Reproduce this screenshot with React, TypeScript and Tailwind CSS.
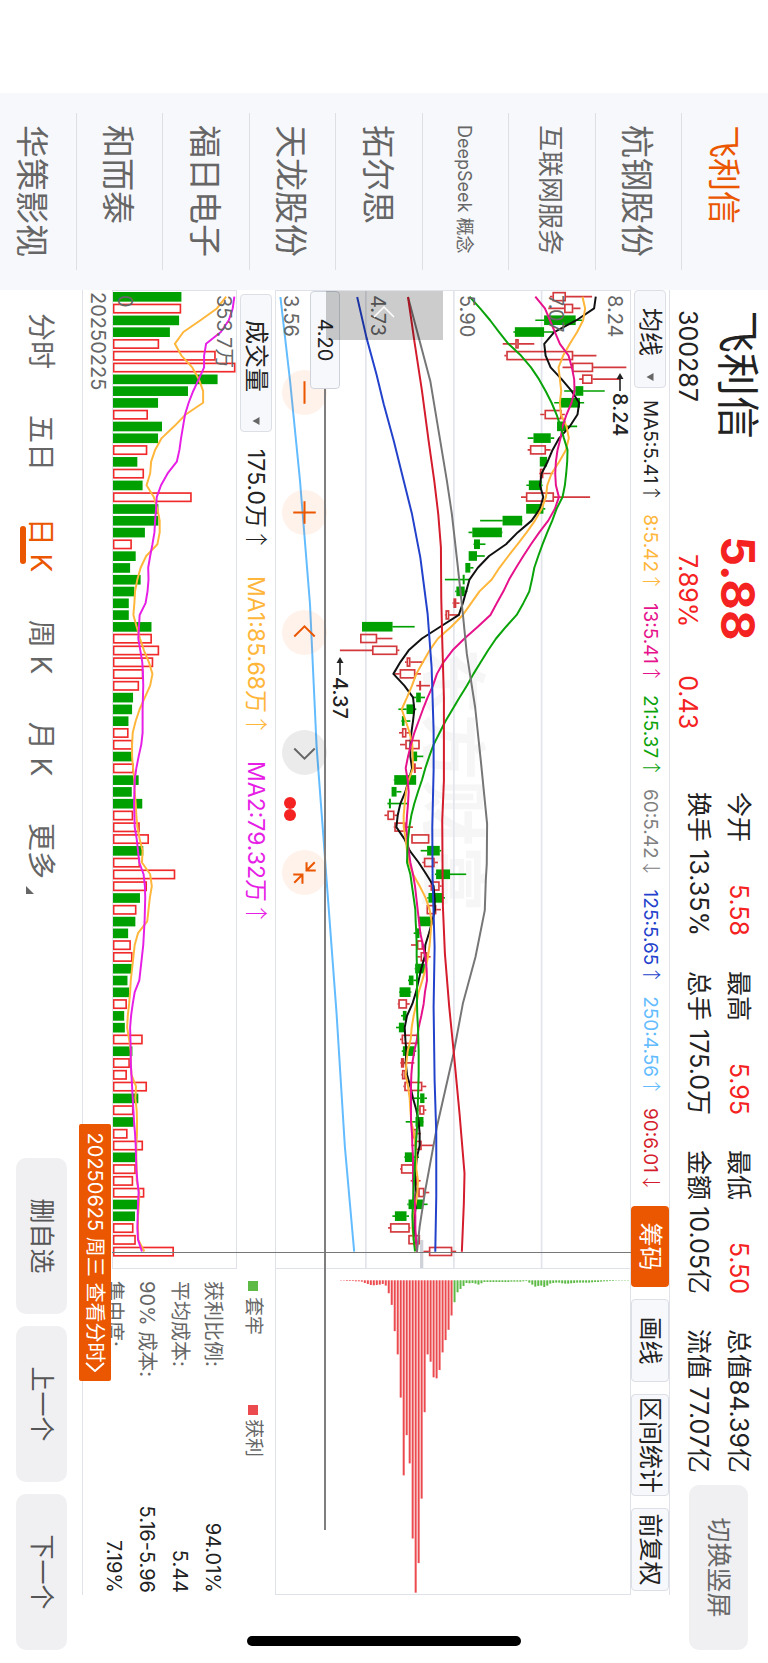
import { clsx } from "clsx";

// Chart space is 3 units per pixel. Prices are measured from the bottom of the screen.
const TOP = 1893;
const VOLUME_TOP = 713;
const STEP = 35.4;
const FIRST = 17;

const stocks = ["飞利信", "杭钢股份", "互联网服务", "DeepSeek 概念", "拓尔思", "天龙股份", "福日电子", "和而泰", "华策影视"];

const stats = [
  { label: "今开", value: "5.58", up: true },
  { label: "最高", value: "5.95", up: true },
  { label: "最低", value: "5.50", up: true },
  { label: "总值", value: "84.39亿" },
  { label: "换手", value: "13.35%" },
  { label: "总手", value: "175.0万" },
  { label: "金额", value: "10.05亿" },
  { label: "流值", value: "77.07亿" },
];

const averages = [
  { text: "MA5:5.41", dir: "↑", color: "text-[#222222]" },
  { text: "8:5.42", dir: "↑", color: "text-[#ffb63a]" },
  { text: "13:5.41", dir: "↑", color: "text-[#e6128c]" },
  { text: "21:5.37", dir: "↑", color: "text-[#0aa30a]" },
  { text: "60:5.42", dir: "↓", color: "text-[#808080]" },
  { text: "125:5.65", dir: "↑", color: "text-[#2342cc]" },
  { text: "250:4.56", dir: "↑", color: "text-[#63bcff]" },
  { text: "90:6.01", dir: "↓", color: "text-[#d41c2c]" },
];

// direction, body low, body high, wick low, wick high
type Candle = [string, number, number, number, number];

const candles: Candle[] = [
  ["r", 1660, 1700, 1652, 1779], ["r", 1695, 1722, 1647, 1744], ["g", 1635, 1729, 1608, 1749], ["g", 1547, 1634, 1542, 1667],
  ["r", 1548, 1558, 1510, 1605], ["r", 1521, 1722, 1515, 1792], ["r", 1719, 1782, 1690, 1882], ["r", 1749, 1780, 1740, 1864],
  ["g", 1729, 1752, 1695, 1817], ["g", 1685, 1742, 1665, 1755], ["r", 1636, 1687, 1623, 1697], ["g", 1674, 1700, 1674, 1734],
  ["g", 1603, 1654, 1585, 1665], ["r", 1592, 1640, 1585, 1654], ["g", 1622, 1643, 1622, 1643], ["r", 1622, 1632, 1620, 1662],
  ["g", 1589, 1627, 1581, 1630], ["r", 1580, 1664, 1565, 1773], ["g", 1581, 1632, 1581, 1638], ["g", 1510, 1568, 1442, 1569],
  ["g", 1419, 1507, 1407, 1509], ["g", 1424, 1441, 1422, 1458], ["g", 1408, 1432, 1408, 1456], ["g", 1398, 1412, 1398, 1422],
  ["g", 1391, 1395, 1336, 1410], ["g", 1371, 1395, 1367, 1404], ["r", 1362, 1370, 1359, 1380], ["r", 1338, 1349, 1336, 1380],
  ["g", 1087, 1178, 1087, 1245], ["r", 1081, 1132, 1081, 1178], ["r", 1117, 1193, 1020, 1199], ["r", 1221, 1232, 1216, 1273],
  ["r", 1200, 1247, 1185, 1264], ["r", 1261, 1264, 1250, 1291], ["g", 1250, 1263, 1237, 1276], ["g", 1221, 1244, 1196, 1250],
  ["g", 1207, 1214, 1205, 1232], ["r", 1207, 1220, 1198, 1228], ["r", 1217, 1260, 1201, 1260], ["g", 1240, 1252, 1237, 1271],
  ["r", 1244, 1248, 1238, 1267], ["g", 1184, 1249, 1182, 1249], ["g", 1176, 1190, 1176, 1205], ["g", 1168, 1173, 1163, 1222],
  ["r", 1163, 1184, 1154, 1192], ["r", 1184, 1218, 1182, 1240], ["r", 1235, 1289, 1235, 1289], ["g", 1283, 1320, 1263, 1325],
  ["r", 1273, 1305, 1268, 1315], ["g", 1310, 1351, 1306, 1400], ["r", 1293, 1320, 1287, 1326], ["g", 1287, 1329, 1283, 1336],
  ["r", 1281, 1310, 1281, 1324], ["g", 1258, 1295, 1258, 1295], ["g", 1249, 1259, 1242, 1265], ["r", 1252, 1270, 1234, 1272],
  ["r", 1263, 1283, 1253, 1293], ["g", 1247, 1275, 1245, 1278], ["g", 1228, 1241, 1225, 1255], ["g", 1200, 1232, 1198, 1235],
  ["r", 1196, 1222, 1194, 1230], ["g", 1210, 1220, 1204, 1223], ["g", 1198, 1213, 1189, 1216], ["r", 1206, 1255, 1201, 1257],
  ["g", 1210, 1245, 1206, 1250], ["r", 1204, 1213, 1202, 1244], ["r", 1207, 1218, 1205, 1223], ["r", 1214, 1268, 1211, 1280],
  ["g", 1262, 1274, 1243, 1282], ["r", 1259, 1274, 1256, 1280], ["g", 1248, 1271, 1218, 1272], ["r", 1240, 1252, 1235, 1263],
  ["r", 1248, 1266, 1235, 1301], ["g", 1216, 1240, 1214, 1258], ["r", 1204, 1242, 1201, 1242], ["r", 1248, 1254, 1233, 1263],
  ["r", 1256, 1274, 1250, 1289], ["g", 1227, 1270, 1223, 1284], ["g", 1186, 1220, 1178, 1228], ["r", 1171, 1230, 1165, 1232],
  ["r", 1226, 1261, 1226, 1261], ["r", 1288, 1358, 1271, 1370],
];

const volumes = [
  547, 546, 540, 512, 479, 651, 711, 657, 567, 476, 445, 488, 476, 443, 413, 433, 429, 578, 477, 477, 436, 396, 408, 391, 423, 404, 387,
  387, 456, 457, 479, 461, 431, 418, 400, 397, 386, 386, 399, 397, 402, 417, 396, 428, 400, 420, 448, 431, 421, 528, 442, 421, 410, 407,
  385, 393, 398, 396, 383, 388, 381, 373, 375, 429, 398, 390, 381, 442, 416, 401, 402, 383, 430, 408, 408, 400, 434, 413, 406, 401, 408,
  524,
];
// Volume colours follow the day's close, which differs from the candle on a few days
const redVolumes = new Set([
  1, 4, 5, 6, 10, 13, 15, 17, 21, 29, 30, 31, 32, 33, 37, 38, 40, 44, 45, 46, 48, 49, 50, 52, 55, 56, 60, 63, 65, 66, 67, 69, 71, 72, 74,
  75, 76, 79, 80, 81,
]);

const ma5 = [
  1790, 1785, 1732, 1665, 1635, 1639, 1654, 1687, 1717, 1740, 1735, 1712, 1680, 1660, 1645, 1627, 1622, 1632, 1622, 1597, 1555, 1520,
  1469, 1435, 1410, 1400, 1390, 1378, 1322, 1267, 1227, 1202, 1181, 1214, 1240, 1244, 1240, 1235, 1232, 1232, 1237, 1227, 1217, 1202,
  1194, 1190, 1214, 1230, 1257, 1280, 1302, 1305, 1306, 1298, 1288, 1277, 1275, 1265, 1257, 1249, 1238, 1222, 1215, 1217, 1220, 1218,
  1222, 1232, 1240, 1250, 1257, 1260, 1260, 1252, 1248, 1246, 1250, 1249, 1245, 1245, 1248, 1252,
];
const ma8 = [
  1750, 1758, 1752, 1734, 1712, 1692, 1678, 1682, 1686, 1682, 1685, 1702, 1709, 1700, 1680, 1657, 1644, 1640, 1627, 1607, 1582, 1555,
  1527, 1500, 1477, 1440, 1415, 1390, 1355, 1315, 1290, 1270, 1250, 1237, 1222, 1206, 1218, 1230, 1238, 1239, 1240, 1227, 1219, 1215,
  1212, 1212, 1218, 1222, 1228, 1240, 1260, 1278, 1290, 1296, 1293, 1290, 1285, 1278, 1268, 1257, 1250, 1242, 1236, 1233, 1224, 1220,
  1218, 1225, 1230, 1232, 1235, 1243, 1247, 1250, 1250, 1255, 1253, 1248, 1240, 1238, 1242, 1250,
];
const ma13 = [
  1608, 1637, 1652, 1667, 1682, 1708, 1718, 1725, 1726, 1717, 1702, 1690, 1684, 1675, 1670, 1668, 1670, 1679, 1667, 1647, 1620, 1595,
  1572, 1550, 1529, 1512, 1492, 1473, 1435, 1395, 1359, 1332, 1312, 1300, 1284, 1270, 1257, 1244, 1234, 1225, 1218, 1224, 1227, 1225,
  1222, 1220, 1223, 1227, 1232, 1240, 1246, 1250, 1254, 1258, 1262, 1270, 1277, 1281, 1282, 1276, 1272, 1265, 1257, 1252, 1244, 1238,
  1235, 1234, 1234, 1234, 1234, 1237, 1238, 1240, 1240, 1240, 1242, 1246, 1247, 1247, 1249, 1252,
];
const ma21 = [
  1410, 1442, 1472, 1499, 1527, 1565, 1595, 1619, 1639, 1657, 1672, 1684, 1694, 1705, 1704, 1701, 1697, 1690, 1672, 1659, 1644, 1630,
  1617, 1605, 1598, 1590, 1572, 1552, 1520, 1490, 1466, 1444, 1422, 1402, 1380, 1359, 1338, 1320, 1302, 1289, 1277, 1267, 1255, 1244,
  1235, 1229, 1225, 1223, 1222, 1232, 1237, 1242, 1247, 1248, 1250, 1251, 1251, 1252, 1252, 1252, 1252, 1253, 1255, 1256, 1257, 1257,
  1257, 1256, 1255, 1254, 1253, 1251, 1248, 1247, 1245, 1243, 1241, 1240, 1238, 1240, 1242, 1246,
];
const volumeMa1 = [
  683, 655, 605, 553, 527, 547, 580, 600, 613, 613, 560, 525, 487, 467, 455, 452, 441, 463, 474, 481, 481, 474, 440, 423, 413, 406, 404,
  401, 411, 421, 433, 448, 459, 452, 436, 420, 408, 399, 397, 397, 400, 404, 405, 408, 410, 413, 420, 429, 427, 452, 457, 451, 447, 443,
  415, 405, 401, 397, 393, 391, 388, 384, 382, 388, 393, 393, 395, 409, 407, 411, 412, 412, 410, 410, 411, 411, 419, 418, 415, 415, 416,
  434,
];
const volumeMa2 = [
  708, 703, 691, 667, 622, 616, 616, 600, 583, 569, 558, 552, 546, 541, 533, 505, 485, 472, 470, 467, 465, 459, 452, 446, 447, 444, 438,
  420, 418, 416, 422, 428, 430, 431, 430, 429, 429, 429, 425, 417, 410, 405, 404, 403, 404, 405, 411, 415, 419, 432, 436, 437, 436, 435,
  433, 431, 427, 423, 419, 405, 399, 394, 391, 392, 393, 393, 395, 397, 399, 401, 403, 406, 408, 409, 410, 413, 417, 415, 414, 413, 415,
  427,
];

type Point = [number, number];

const ma60: Point[] = [
  [18, 1225], [150, 1260], [270, 1292], [420, 1317], [570, 1342], [670, 1357], [820, 1374], [970, 1390], [1090, 1402], [1250, 1427],
  [1410, 1444], [1600, 1463], [1720, 1462], [1770, 1459], [1860, 1456], [2000, 1428], [2140, 1390], [2290, 1362], [2510, 1312],
  [2700, 1277], [2810, 1260], [2885, 1252],
];
const ma90: Point[] = [
  [18, 1225], [150, 1244], [300, 1267], [450, 1287], [570, 1304], [670, 1316], [770, 1324], [920, 1325], [1050, 1328], [1220, 1333],
  [1470, 1333], [1590, 1328], [1750, 1329], [1850, 1330], [1990, 1336], [2150, 1349], [2290, 1363], [2470, 1380], [2650, 1395],
  [2740, 1393], [2885, 1387],
];
const ma125: Point[] = [
  [18, 1072], [140, 1100], [250, 1130], [340, 1152], [450, 1182], [570, 1212], [670, 1237], [800, 1262], [970, 1284], [1130, 1296],
  [1320, 1302], [1440, 1302], [1610, 1298], [1770, 1299], [1970, 1305], [2150, 1302], [2370, 1305], [2530, 1310], [2720, 1310],
  [2885, 1307],
];
const ma250: Point[] = [
  [18, 841], [270, 870], [570, 900], [940, 930], [1370, 950], [1700, 975], [1770, 980], [2170, 1010], [2570, 1035], [2885, 1063],
];

const chips = [
  1, 1, 2, 2, 2, 3, 3, 4, 8, 11, 14, 15, 14, 13, 11, 16, 39, 74, 153, 223, 353, 587, 466, 551, 777, 940, 851, 657, 397, 223, 245, 292,
  295, 270, 217, 180, 149, 106, 66, 36, 26, 17, 8, 9, 8, 10, 13, 9, 5, 5, 5, 5, 5, 5, 5, 5, 5, 4, 4, 4, 4, 3, 2, 7, 13, 19, 17, 16, 20,
  16, 10, 8, 7, 7, 9, 10, 10, 9, 8, 7, 7, 7, 7, 7, 6, 5, 5, 4, 3, 3, 2, 2, 1, 1, 1, 1, 1,
];
const PROFIT_CHIPS = 38;

const daily = (values: number[], top: number) => values.map((v, i) => `${FIRST + i * STEP},${top - v}`).join(" ");
const sparse = (points: Point[]) => points.map(([x, v]) => `${x},${TOP - v}`).join(" ");

function Line({ points, color }: { points: string; color: string }) {
  return <polyline points={points} fill="none" stroke={color} strokeWidth={6} strokeLinejoin="round" />;
}

function PriceChart() {
  return (
    <svg viewBox="0 0 2934 1065" preserveAspectRatio="none" className="block w-full h-full">
      {[266, 530, 795].map((y) => (
        <line key={y} x1={0} x2={2934} y1={y} y2={y} stroke="#e1e4eb" strokeWidth={5} />
      ))}
      {candles.map(([dir, low, high, wickLow, wickHigh], i) => {
        const x = FIRST + i * STEP;
        const color = dir === "g" ? "#00a000" : "#d2383c";
        return (
          <g key={i} stroke={color} strokeWidth={5}>
            <line x1={x} x2={x} y1={TOP - wickHigh} y2={TOP - high} />
            <line x1={x} x2={x} y1={TOP - low} y2={TOP - wickLow} />
            <rect x={x - 12} y={TOP - high + 2} width={24} height={Math.max(high - low - 4, 1)} fill={dir === "g" ? color : "none"} />
          </g>
        );
      })}
      <line x1={2850} x2={2934} y1={627} y2={627} stroke="#cfd2d8" strokeWidth={10} />
      <Line points={daily(ma5, TOP)} color="#111111" />
      <Line points={daily(ma8, TOP)} color="#ffb63a" />
      <Line points={daily(ma13, TOP)} color="#e6128c" />
      <Line points={daily(ma21, TOP)} color="#0aa30a" />
      <Line points={sparse(ma60)} color="#767676" />
      <Line points={sparse(ma125)} color="#2342cc" />
      <Line points={sparse(ma250)} color="#63bcff" />
      <Line points={sparse(ma90)} color="#d41c2c" />
    </svg>
  );
}

function VolumeChart() {
  return (
    <svg viewBox="0 0 2934 374" preserveAspectRatio="none" className="block w-full h-full">
      {volumes.map((v, i) => {
        const x = FIRST + i * STEP;
        const red = redVolumes.has(i);
        return red ? (
          <rect key={i} x={x - 12} y={VOLUME_TOP - v + 2} width={25} height={v - 343} fill="none" stroke="#f02a2a" strokeWidth={5} />
        ) : (
          <rect key={i} x={x - 14} y={VOLUME_TOP - v} width={29} height={v - 339} fill="#00a000" />
        );
      })}
      <Line points={daily(volumeMa1, VOLUME_TOP)} color="#ffb63a" />
      <Line points={daily(volumeMa2, VOLUME_TOP)} color="#e61ee6" />
    </svg>
  );
}

function ChipChart() {
  return (
    <svg viewBox="0 0 978 1065" preserveAspectRatio="none" className="block w-full h-full">
      {chips.map((length, i) => (
        <rect key={i} x={34} y={TOP - 1023 - i * 9 - 3} width={length} height={6} fill={i < PROFIT_CHIPS ? "#eb4a4e" : "#5cba45"} />
      ))}
    </svg>
  );
}

function Picker({ label, width }: { label: string; width: string }) {
  return (
    <div className={clsx("flex items-center border border-[#dcdfe5] bg-[#f7f8fb] rounded-sm shrink-0 h-[32px]", width)}>
      <select aria-label={label} className="appearance-none flex-1 min-w-0 bg-transparent text-center text-2xl leading-[28px] text-[#222222]">
        <option>{label}</option>
      </select>
      <svg viewBox="0 0 8 8" className="w-2 h-2 mr-1.5">
        <path d="M0 0.5h8l-4 7z" fill="#666666" />
      </svg>
    </div>
  );
}

function Arrow({ dir }: { dir: string }) {
  return <span className="font-['Noto_Sans_CJK_SC',sans-serif] font-light leading-none">{dir}</span>;
}

function Pointer({ text }: { text: string }) {
  return (
    <>
      <svg viewBox="0 0 18 10" className="w-[18px] h-[10px]">
        <path d="M5 5h13" stroke="#222222" strokeWidth={1.6} />
        <path d="M0 5l6-3.5v7z" fill="#222222" />
      </svg>
      <span>{text}</span>
    </>
  );
}

const controls = [
  { name: "缩小", path: "M-11 0h22" },
  { name: "放大", path: "M-11 0h22M0-11v22" },
  { name: "左移", path: "M4-10l-10 10l10 10" },
  { name: "右移", path: "M-4-10l10 10l-10 10", muted: true },
  { name: "收起", path: "M-10-10l8 8M-10-2h8v-9M10 10l-8-8M11 2h-9v9" },
];

const tabs = ["分时", "五日", "日 K", "周 K", "月 K", "更多"];
const activeTab = "日 K";

export default function App() {
  return (
    <div className="h-screen overflow-hidden bg-white">
      {/* The whole screen is held sideways */}
      <div className="relative flex w-[100vh] h-[100vw] origin-top-left translate-x-[100vw] rotate-90 pl-[93px] font-['Inter','Noto_Sans_CJK_SC',sans-serif] text-[#222222]">
        {/* Watch list */}
        <nav className="flex flex-col w-[197px] shrink-0 px-5 bg-[#f7f8fb] text-[33px] text-[#666666]">
          {stocks.map((name, i) => (
            <a
              key={name}
              href="#"
              className={clsx(
                "flex items-center pl-3 whitespace-nowrap leading-none",
                i < 8 ? "flex-1 pt-1 border-b border-[#dddfe3]" : "h-[76px] pt-3",
                i === 0 && "text-[#eb5600]",
                name.length === 5 && "text-[26px]",
                name.length > 5 && "text-lg"
              )}
            >
              {name}
            </a>
          ))}
        </nav>

        <main className="flex flex-col flex-1 min-w-0">
          {/* Quote */}
          <header className="flex h-[98px] pl-5 pr-[13px] whitespace-nowrap">
            <div className="w-[226px]">
              <h1 className="text-[43px] leading-[60px]">飞利信</h1>
              <p className="text-[25px] leading-[40px]">300287</p>
            </div>
            <div className="text-[#f52222]">
              <p className="text-[47px] leading-[60px] font-bold">5.88</p>
              <p className="flex gap-[48px] pl-[18px] text-[25px] leading-[40px]">
                <span>7.89%</span>
                <span>0.43</span>
              </p>
            </div>
            <dl className="grid grid-cols-[repeat(4,144px)] gap-x-[35px] auto-rows-[40px] items-center ml-auto mr-3 pt-[10px] text-[25px]">
              {stats.map((item) => (
                <div key={item.label} className="flex justify-between">
                  <dt>{item.label}</dt>
                  <dd className={clsx(item.up && "text-[#f52222]")}>{item.value}</dd>
                </div>
              ))}
            </dl>
            <button className="w-[165px] h-[59px] mt-5 rounded-[10px] bg-[#f0f0f3] text-[25px] text-[#666666]">切换竖屏</button>
          </header>

          <section className="relative flex flex-col flex-1 mr-[68px] border-y border-[#dfe2e8]">
            {/* Toolbar */}
            <div className="flex items-center h-[38px]">
              <Picker label="均线" width="w-[98px]" />
              <ul className="flex flex-1 justify-between pl-3 pr-[14px] text-[19px] whitespace-nowrap">
                {averages.map((item) => (
                  <li key={item.text} className={item.color}>
                    {item.text}
                    <Arrow dir={item.dir} />
                  </li>
                ))}
              </ul>
              <div className="flex gap-3 pr-1 text-2xl whitespace-nowrap">
                <button className="w-[81px] h-[38px] rounded-sm bg-[#eb5600] text-white">筹码</button>
                <button className="w-[83px] h-[38px] rounded-sm border border-[#dcdfe5] bg-[#f7f8fb]">画线</button>
                <button className="w-[102px] h-[38px] rounded-sm border border-[#dcdfe5] bg-[#f7f8fb]">区间统计</button>
                <button className="w-[83px] h-[38px] rounded-sm border border-[#dcdfe5] bg-[#f7f8fb]">前复权</button>
              </div>
            </div>

            <div className="flex flex-1 min-h-0">
              <div className="relative flex flex-col flex-1 min-w-0">
                <div className="relative flex-1 min-h-0 border border-[#dfe2e8]">
                  <div aria-hidden="true" className="absolute left-[357px] top-[144px] text-[66px] leading-none font-bold text-[#f6f6f6]">
                    东方财富
                  </div>
                  <div className="absolute inset-0">
                    <PriceChart />
                  </div>
                  <div className="absolute inset-0 text-xl leading-6 text-[#666666]">
                    <span className="absolute left-1 top-[3px]">8.24</span>
                    <span className="absolute left-1 top-[62px]">7.07</span>
                    <span className="absolute left-1 top-[151px]">5.90</span>
                    <span className="absolute left-1 top-[240px]">4.73</span>
                    <span className="absolute left-1 bottom-[3px]">3.56</span>
                  </div>
                  <div className="absolute left-[82px] -top-1 flex items-center gap-0.5 text-xl font-medium">
                    <Pointer text="8.24" />
                  </div>
                  <div className="absolute left-[366px] top-[276px] flex items-center gap-0.5 text-xl font-medium">
                    <Pointer text="4.37" />
                  </div>
                  <div className="absolute left-[79px] top-[303px] flex gap-[75px]">
                    {controls.map((item) => (
                      <button
                        key={item.name}
                        aria-label={item.name}
                        className={clsx("w-[45px] h-[45px] rounded-full", item.muted ? "bg-black/8 text-[#666666]" : "bg-[#eb5600]/8 text-[#eb5600]")}
                      >
                        <svg viewBox="-22 -22 44 44" className="w-full h-full">
                          <path d={item.path} fill="none" stroke="currentColor" strokeWidth={2} />
                        </svg>
                      </button>
                    ))}
                  </div>
                  <svg viewBox="0 0 24 12" className="absolute left-[506px] top-[334px] w-6 h-3">
                    <circle cx={6} cy={6} r={6} fill="#f52222" />
                    <circle cx={18} cy={6} r={6} fill="#f52222" />
                  </svg>
                  {/* Crosshair price */}
                  <div className="absolute left-0 -right-[262px] top-[304px] h-0.5 bg-[#7f7d7d]" />
                  <div className="absolute left-0 top-[290px] w-[98px] h-[30px] rounded-sm border border-[#cfd4dc] bg-[#f7f8fb] text-center text-xl leading-[28px]">
                    4.20
                  </div>
                  <div className="absolute left-0 top-[187px] flex items-center justify-center w-[49px] h-[117px] bg-black/20">
                    <svg viewBox="0 0 12 22" className="w-3 h-[22px] mr-2">
                      <path d="M11 1L1 11l10 10" fill="none" stroke="#ffffff" strokeWidth={1.5} />
                    </svg>
                  </div>
                </div>

                {/* Volume */}
                <div className="flex items-center gap-[25px] h-[38px] pl-1 text-[23px] leading-[38px] whitespace-nowrap">
                  <Picker label="成交量" width="w-[138px]" />
                  <span className="-ml-2">
                    175.0万
                    <Arrow dir="↑" />
                  </span>
                  <span className="text-[#ffb63a]">
                    MA1:85.68万
                    <Arrow dir="↑" />
                  </span>
                  <span className="text-[#e61ee6]">
                    MA2:79.32万
                    <Arrow dir="↑" />
                  </span>
                </div>
                <div className="relative h-[125px] border border-[#dfe2e8]">
                  <div className="absolute inset-0">
                    <VolumeChart />
                  </div>
                  <div className="absolute inset-0 text-xl leading-6 text-[#666666]">
                    <span className="absolute left-1 top-0">353.7万</span>
                    <span className="absolute left-1 bottom-0">0</span>
                  </div>
                </div>
                <p className="h-[29px] pl-0.5 text-xl leading-[28px] text-[#666666]">20250225</p>
                <div className="absolute left-[962px] top-0 bottom-[29px] w-px bg-[#777777]" />
              </div>

              {/* Chip distribution */}
              <aside className="flex flex-col w-[326px] shrink-0 whitespace-nowrap">
                <div className="flex-1 min-h-0 border-y border-r border-[#dfe2e8]">
                  <ChipChart />
                </div>
                <div className="flex items-center gap-[70px] h-[44px] pl-3 text-[19px] text-[#666666]">
                  <span className="flex items-center gap-1.5">
                    <i className="w-2.5 h-2.5 bg-[#5cba45]" />
                    套牢
                  </span>
                  <span className="flex items-center gap-1">
                    <i className="w-2.5 h-2.5 bg-[#eb4a4e]" />
                    获利
                  </span>
                </div>
                <dl className="h-[148px] pl-3 pr-0.5 pt-0.5 text-xl leading-[33px]">
                  <div className="flex justify-between">
                    <dt className="text-[#666666]">获利比例:</dt>
                    <dd>94.01%</dd>
                  </div>
                  <div className="flex justify-between">
                    <dt className="text-[#666666]">平均成本:</dt>
                    <dd>5.44</dd>
                  </div>
                  <div className="flex justify-between">
                    <dt className="text-[#666666]">90% 成本:</dt>
                    <dd>5.16-5.96</dd>
                  </div>
                  <div className="flex justify-between">
                    <dt className="text-[#666666]">集中度:</dt>
                    <dd>7.19%</dd>
                  </div>
                </dl>
              </aside>
            </div>

            <button className="absolute right-[214px] -bottom-1 flex items-center justify-center w-[257px] h-[32px] rounded-xs bg-[#eb5600] text-xl text-white whitespace-nowrap">
              20250625 周三 查看分时
              <svg viewBox="0 0 10 20" className="w-2.5 h-5">
                <path d="M1 1l8 9l-8 9" fill="none" stroke="currentColor" strokeWidth={2} />
              </svg>
            </button>
          </section>

          {/* Periods */}
          <footer className="flex items-center h-[83px] pr-[13px] whitespace-nowrap">
            <div role="tablist" className="flex text-[28px] leading-[42px] text-[#666666]">
              {tabs.map((tab) => (
                <button key={tab} role="tab" aria-selected={tab === activeTab} className={clsx("relative w-[102px]", tab === activeTab && "text-[#eb5600]")}>
                  {tab}
                  {tab === activeTab && <span className="absolute left-8 bottom-0 w-[38px] h-1.5 rounded-full bg-[#eb5600]" />}
                  {tab === "更多" && (
                    <svg viewBox="0 0 8 8" className="absolute right-2 bottom-1.5 w-2 h-2">
                      <path d="M8 0v8H0z" fill="#666666" />
                    </svg>
                  )}
                </button>
              ))}
            </div>
            <div className="flex gap-3 ml-auto text-[25px] text-[#555555]">
              <button className="w-[156px] h-[51px] rounded-[10px] bg-[#f0f0f3]">删自选</button>
              <button className="w-[156px] h-[51px] rounded-[10px] bg-[#f0f0f3]">上一个</button>
              <button className="w-[156px] h-[51px] rounded-[10px] bg-[#f0f0f3]">下一个</button>
            </div>
          </footer>
        </main>

        {/* Home indicator */}
        <div className="absolute right-[17px] top-[247px] bottom-[247px] w-2.5 rounded-full bg-black" />
      </div>
    </div>
  );
}
